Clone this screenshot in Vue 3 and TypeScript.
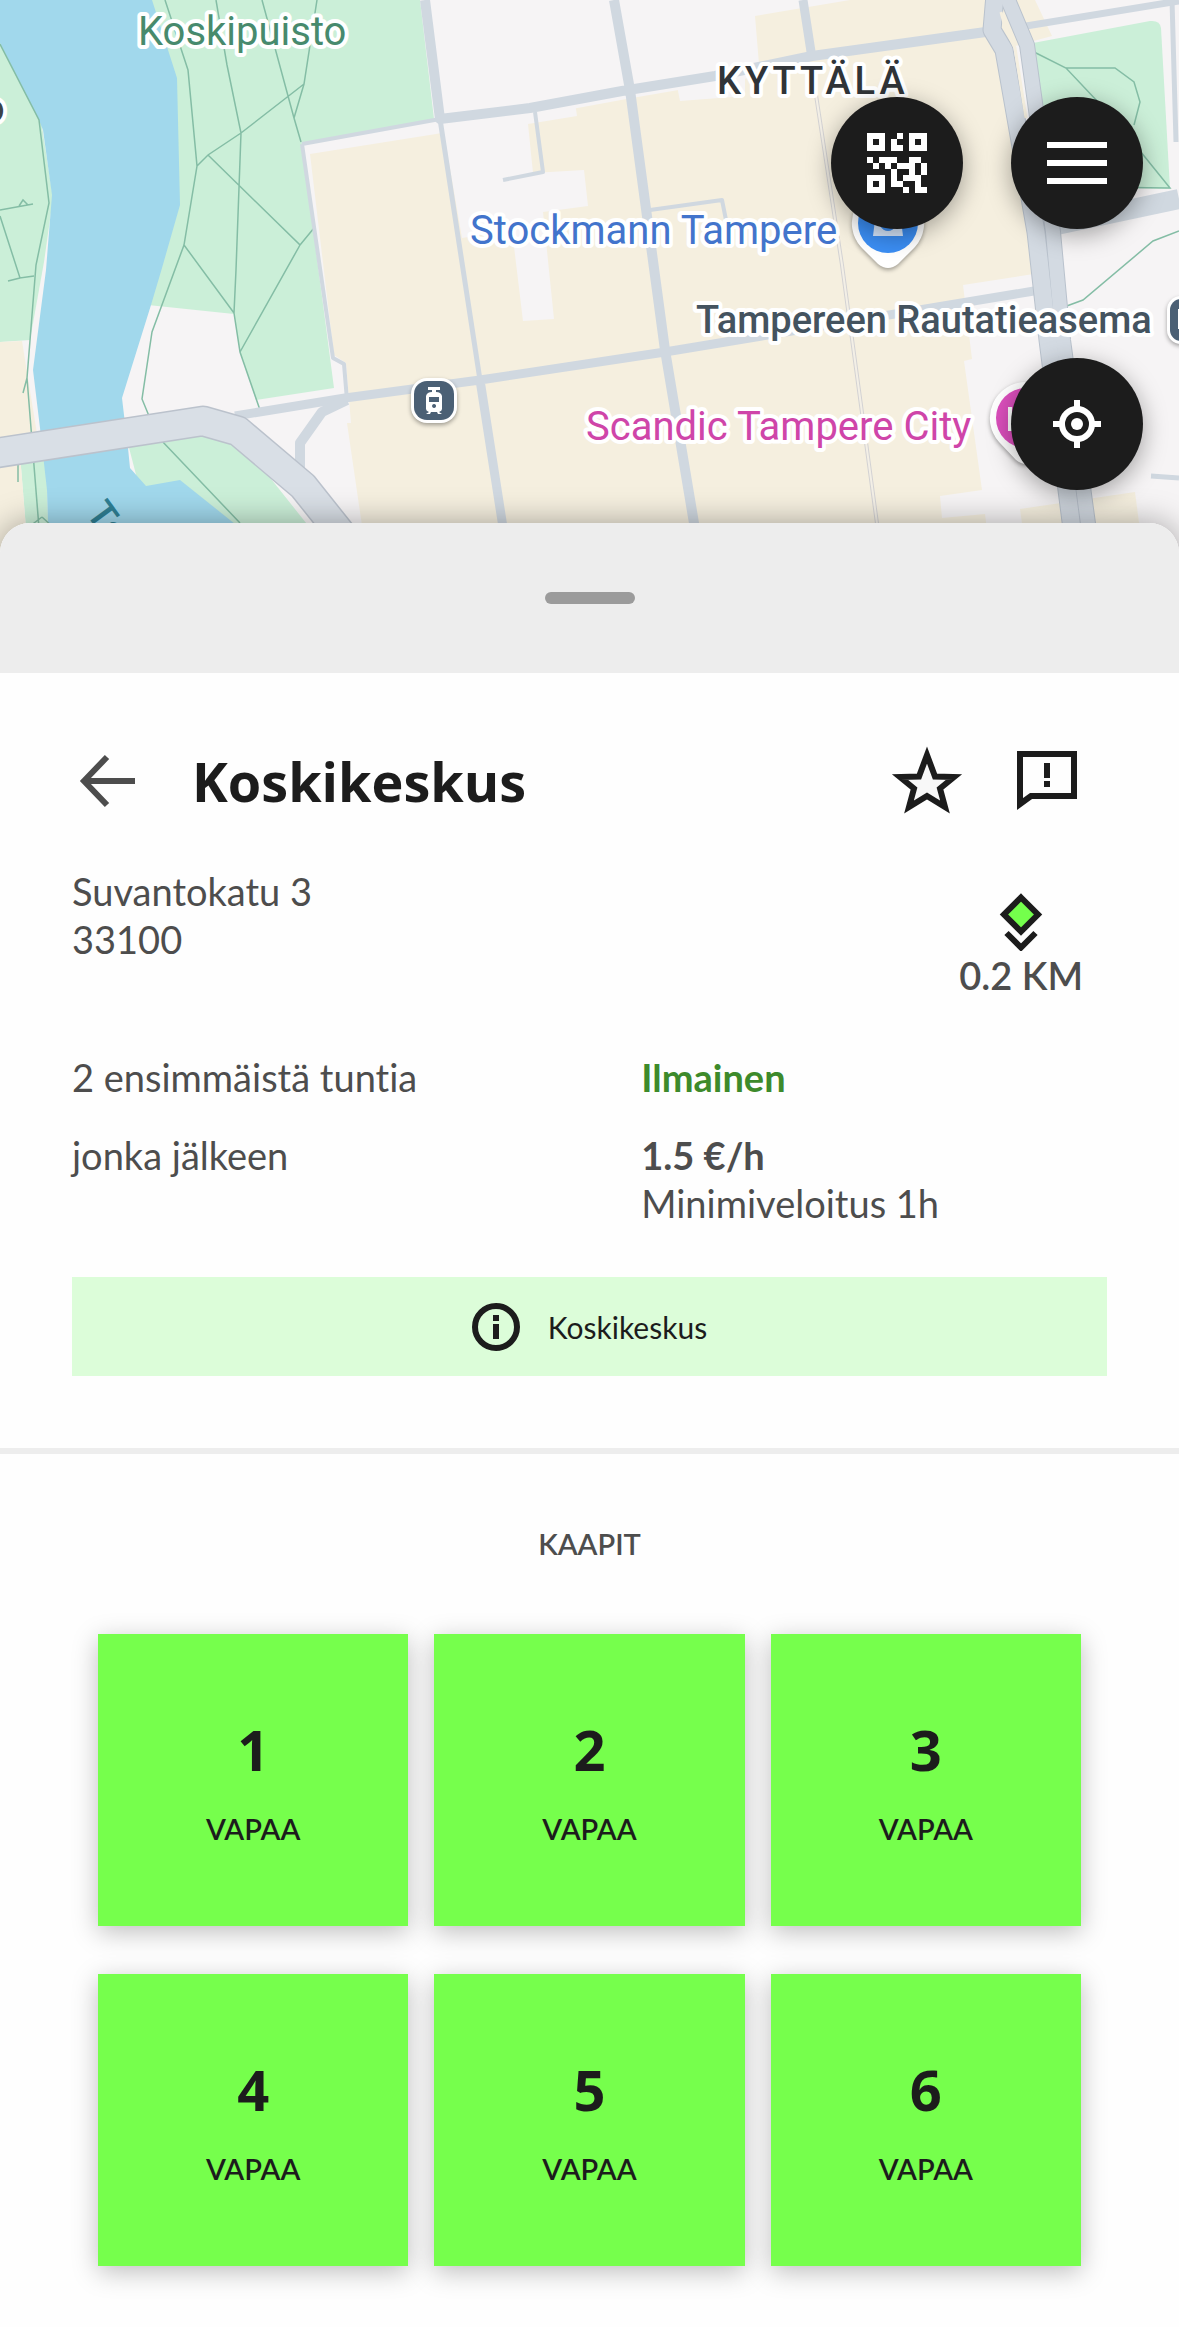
<script setup lang="ts">
interface Locker {
  id: number
  status: string
}

const lockers: Locker[] = [1, 2, 3, 4, 5, 6].map((id) => ({ id, status: 'VAPAA' }))

const qrRows: string[] = [
  '1110010111',
  '1010100101',
  '1110110111',
  '0000000000',
  '1011100110',
  '0101011101',
  '0000100101',
  '1110101110',
  '1010110010',
  '1110001011',
]
const qrPath: string = qrRows
  .map((row, y) => [...row].map((c, x) => (c === '1' ? `M${x} ${y}h1v1h-1z` : '')).join(''))
  .join('')
</script>

<template>
  <main class="page">
    <section class="map" aria-label="Kartta">
      <svg class="map-canvas" viewBox="0 0 1179 553" preserveAspectRatio="xMidYMin slice">
        <rect width="1179" height="553" fill="#f6f4f5" />
        <g fill="#cbefd8">
          <path d="M0 40L41 120 53 198 44 262 30 340 0 342z" />
          <path d="M148 0H420L434 119 302 144 334 388 256 400 240 352 234 314 148 305 150 200z" />
          <path d="M20 455L46 450 49 553H28z" />
          <path d="M127 440L200 430 240 440 330 553H240L180 490H140z" />
          <path d="M1033 43L1150 21Q1160 20 1161 28L1170 189 1050 186z" />
        </g>
        <g fill="#f5efdf">
          <path d="M0 342L22 341 38 440 0 450z" />
          <path d="M0 455H20L28 553H0z" />
          <path d="M310 154L436 134 632 98 760 76 755 16 850 0H1035L1052 36 1000 50 1040 273 963 285 972 359 964 361 982 490 940 496 942 518 985 514 990 553H366L347 423 351 423 346 363 334 355z" />
          <path d="M1020 509L1135 492 1143 553H1026z" />
        </g>
        <g fill="#f6f4f5">
          <path d="M442 122L575 102 577 116 528 124 533 173 584 170 588 206 543 212 554 319 523 321 512 230 462 238z" />
          <path d="M677 86L745 76V96L680 101z" />
        </g>
        <path fill="#a1d8ec" d="M0 0H152L177 78 180 205 162 268 151 305 122 398 124 415 128 448 130 468 146 486 180 480 245 532V553H49L47 490 40 428 33 370 46 270 52 195 43 130 39 120 0 43z" />

        <g fill="none" stroke="#84bda5" stroke-width="1.5">
          <path d="M0 44L39 120 49 203 36 265 27 378 41 553M27 378L23 393M0 210L33 204M19 206l4-6 5 5M0 216L20 278 34 276M8 281L20 278M18 462V482M42 517L30 526M42 517L54 528" />
          <path d="M165 0L188 70 197 166 184 245 152 332 142 399 149 416M216 0L227 65 241 133 236 270 234 313 240 352 260 410M262 0L294 118 301 142M317 0L304 84 294 118M304 84L241 133 208 155 197 166M208 155L300 245 240 352M300 245L314 228M184 245L234 313M161 440L240 523" />
          <path d="M1034 52L1066 68 1115 120 1170 188 1085 187M1066 68H1115L1134 82 1140 102 1134 125M1179 231L1153 241 1083 300 1064 307" />
        </g>

        <g fill="none" stroke="#d0d8e0" stroke-linejoin="round">
          <path stroke-width="4" d="M302 144L440 119M302 144L333 358 344 364 347 400M535 112L543 172 503 180M650 210L722 200 727 225" />
          <path stroke-width="5" d="M440 119L480 380M1172 0L1176 142M1151 476L1179 478" />
          <path stroke-width="9" d="M803 0L812 58M480 380L507 553M235 416L345 398 480 380 665 352 1040 290" />
          <path stroke-width="10" d="M425 0L440 119 530 108 622 91 715 76 812 56 1000 30M614 0L630 90 665 350 699 553" />
          <path stroke-width="7" d="M1020 27L1179 1" />
          <path stroke-width="10" d="M347 400L322 412 300 443V475" />
          <path stroke-width="20" d="M1052 226L1179 199" />
        </g>
        <g fill="none" stroke="#d3d2d3">
          <path stroke-width="4" d="M816 95L842 265 881 553" />
          <path stroke="#f3efe6" stroke-width="2" d="M816 95L842 265 881 553" />
        </g>
        <g fill="none" stroke-linejoin="round">
          <path stroke="#b9c2cd" stroke-width="19" d="M995-5L992 30 1004 50 1036 232 1048 340 1075 553" />
          <path stroke="#b9c2cd" stroke-width="16" d="M1006-5L1027 45 1053 232 1063 340 1092 553" />
          <path stroke="#d3dae2" stroke-width="17" d="M995-5L992 30 1004 50 1036 232 1048 340 1075 553" />
          <path stroke="#d3dae2" stroke-width="14" d="M1006-5L1027 45 1053 232 1063 340 1092 553" />
          <path stroke="#f5efdf" stroke-width="3" d="M1008 33L1015 48 1026 118M1001 12L1004 23" />
          <path stroke="#bbc2cc" stroke-width="31" d="M-10 454L203 421 238 431 303 486 350 545" />
          <path stroke="#d9dfe6" stroke-width="28" d="M-10 454L203 421 238 431 303 486 350 545" />
        </g>

        <g class="marker">
          <path fill="#fff" d="M888 187a36 36 0 0 1 27 60L898 264Q888 272 878 264L861 247A36 36 0 0 1 888 187z" />
          <circle cx="888" cy="223" r="30" fill="#3b8ef4" />
          <path fill="#d8e8fd" d="M875 220H901L903 236H873z" />
          <path fill="none" stroke="#3b8ef4" stroke-width="4" d="M881 224Q888 234 895 224" />
        </g>
        <g class="marker">
          <path fill="#fff" d="M1026 382a36 36 0 0 1 27 60L1036 460Q1026 468 1016 460L999 442A36 36 0 0 1 1026 382z" />
          <circle cx="1026" cy="418" r="30" fill="#dc4fbd" />
          <path fill="#fff" d="M1008 407h4v24h-4z" />
        </g>
        <g class="marker">
          <rect x="1167" y="296" width="50" height="48" rx="14" fill="#fff" />
          <rect x="1170" y="299" width="44" height="42" rx="11" fill="#4b6075" />
          <path fill="#fff" d="M1178 309h6v20h-6z" />
        </g>
        <g class="marker">
          <rect x="411" y="378" width="46" height="45" rx="16" fill="#fff" />
          <rect x="414" y="381" width="40" height="39" rx="13" fill="#4b6075" />
          <path fill="#fff" fill-rule="evenodd" d="M428 387H440V390H436V392Q441 392 442 396V409Q442 411 439 412L442 414H438L437 412H431L430 414H426L429 412Q426 411 426 409V396Q427 392 432 392V390H428zM429 397V402H439V397zM434 404a2 2 0 1 0 .1 0z" />
        </g>

        <g class="labels">
          <text x="-18" y="122" fill="#3c4248">o</text>
          <text x="138" y="45" fill="#478a6d">Koskipuisto</text>
          <text x="470" y="244" fill="#4274cc">Stockmann Tampere</text>
          <text x="586" y="440" fill="#cf45a9">Scandic Tampere City</text>
          <text x="696" y="333" class="station">Tampereen Rautatieasema</text>
          <text x="717" y="94" class="district">KYTTÄLÄ</text>
          <text class="river" transform="translate(85 513) rotate(54)">Ta</text>
        </g>
      </svg>

      <div class="map-top">
        <button class="fab" type="button" aria-label="Skannaa QR-koodi">
          <svg width="60" height="60" viewBox="0 0 10 10" shape-rendering="crispEdges">
            <path :d="qrPath" fill="#fff" />
          </svg>
        </button>
        <button class="fab" type="button" aria-label="Valikko">
          <svg width="60" height="60" viewBox="0 0 60 60">
            <path d="M0 9h60v6H0zM0 27h60v6H0zM0 45h60v6H0z" fill="#fff" />
          </svg>
        </button>
      </div>
      <button class="fab locate" type="button" aria-label="Oma sijainti">
        <svg width="48" height="48" viewBox="0 0 48 48">
          <path d="M21 0h6v9h-6zM21 39h6v9h-6zM0 21h9v6H0zM39 21h9v6h-9z" fill="#fff" />
          <circle cx="24" cy="24" r="15" fill="none" stroke="#fff" stroke-width="6" />
          <circle cx="24" cy="24" r="6" fill="#fff" />
        </svg>
      </button>
    </section>

    <section class="sheet">
      <div class="grip"><span class="grip-bar"></span></div>

      <div class="details">
        <header class="title-row">
          <button class="icon-button" type="button" aria-label="Takaisin">
            <svg width="72" height="72" viewBox="0 0 72 72" fill="none" stroke="#4d4d4d" stroke-width="6">
              <path d="M12 36H63M35 12L12 36 35 60" />
            </svg>
          </button>
          <h1>Koskikeskus</h1>
          <button class="icon-button" type="button" aria-label="Lisää suosikiksi">
            <svg width="72" height="72" viewBox="0 0 72 72">
              <path d="M36 10L44 31.500 63 32 49 43.500 54 62 36 51 18 62 23 43.500 9 32 28 31.500z" fill="#f8f8f8" stroke="#1c1c1c" stroke-width="6" />
            </svg>
          </button>
          <button class="icon-button" type="button" aria-label="Anna palautetta">
            <svg width="72" height="72" viewBox="0 0 72 72">
              <path d="M9 9H63V51H20L9 59z" fill="none" stroke="#1c1c1c" stroke-width="6" />
              <path d="M33 18h6v15h-6zM33 36h6v6h-6z" fill="#1c1c1c" />
            </svg>
          </button>
        </header>

        <div class="place-row">
          <address>Suvantokatu 3<br />33100</address>
          <div class="distance">
            <svg width="44" height="58" viewBox="0 0 44 58">
              <path d="M22 4.500L39 21.500 22 38.500 5 21.500z" fill="#74ff4c" stroke="#1c1c1c" stroke-width="6" />
              <path d="M7.500 40L22 54.500 36.500 40" fill="none" stroke="#1c1c1c" stroke-width="6" />
            </svg>
            <span>0.2 KM</span>
          </div>
        </div>

        <dl class="pricing">
          <div class="price">
            <dt>2 ensimmäistä tuntia</dt>
            <dd><strong class="free">Ilmainen</strong></dd>
          </div>
          <div class="price">
            <dt>jonka jälkeen</dt>
            <dd><strong>1.5 €/h</strong><br />Minimiveloitus 1h</dd>
          </div>
        </dl>

        <div class="notice">
          <svg width="48" height="48" viewBox="0 0 48 48">
            <circle cx="24" cy="24" r="21" fill="none" stroke="#1c1c1c" stroke-width="6" />
            <path d="M21 12h6v6h-6zM21 21h6v15h-6z" fill="#1c1c1c" />
          </svg>
          <span>Koskikeskus</span>
        </div>
      </div>

      <div class="lockers">
        <h2>KAAPIT</h2>
        <div class="locker-grid">
          <button v-for="locker in lockers" :key="locker.id" class="locker" type="button">
            <span class="number">{{ locker.id }}</span>
            <span class="status">{{ locker.status }}</span>
          </button>
        </div>
      </div>
    </section>
  </main>
</template>

<style>
body {
  margin: 0;
  background: #fefefe;
}
</style>

<style scoped>
.page {
  font-family: Lato, "Open Sans", sans-serif;
  font-size: 38px;
  font-variant-ligatures: none;
  line-height: 48px;
  color: #4d4d4d;
}

button {
  padding: 0;
  border: 0;
  font: inherit;
  color: inherit;
  cursor: pointer;
}

svg {
  display: block;
}

.map {
  position: relative;
  height: 553px;
  overflow: hidden;
}

.map-canvas {
  width: 100%;
  height: 100%;
}

.marker {
  filter: drop-shadow(0 2px 2px rgba(0, 0, 0, 0.35));
}

.labels {
  font-family: Roboto, sans-serif;
  font-size: 40px;
  stroke: #fff;
  stroke-width: 8px;
  stroke-linejoin: round;
  paint-order: stroke;
}

.labels .station {
  font-size: 38px;
  font-weight: 500;
  fill: #44535f;
}

.labels .district {
  font-size: 38px;
  font-weight: 500;
  letter-spacing: 4px;
  fill: #303438;
}

.labels .river {
  font-size: 38px;
  font-weight: 500;
  fill: #2f7f93;
  stroke: none;
}

.map-top {
  position: absolute;
  top: 97px;
  right: 36px;
  display: flex;
  gap: 48px;
}

.fab {
  display: flex;
  align-items: center;
  justify-content: center;
  width: 132px;
  height: 132px;
  border-radius: 50%;
  background: #1c1c1c;
  box-shadow: 0 6px 24px rgba(0, 0, 0, 0.35);
}

.locate {
  position: absolute;
  top: 358px;
  right: 36px;
}

.sheet {
  position: relative;
  margin-top: -30px;
  border-radius: 30px 30px 0 0;
  background: #fefefe;
  box-shadow: 0 0 32px rgba(0, 0, 0, 0.35);
}

.grip {
  display: flex;
  align-items: center;
  justify-content: center;
  height: 150px;
  border-radius: 30px 30px 0 0;
  background: #ededed;
}

.grip-bar {
  width: 90px;
  height: 12px;
  border-radius: 6px;
  background: #9b9b9b;
}

.details {
  padding: 72px;
  border-bottom: 6px solid #ededed;
}

.title-row {
  display: flex;
  align-items: center;
  gap: 48px;
  padding-right: 24px;
}

.icon-button {
  width: 72px;
  height: 72px;
  background: none;
}

h1 {
  flex: 1;
  margin: 0;
  font-family: "Open Sans", sans-serif;
  font-size: 54px;
  line-height: 72px;
  font-weight: 700;
  color: #1c1c1c;
}

.place-row {
  display: flex;
  justify-content: space-between;
  align-items: flex-start;
  margin-top: 50px;
  padding-right: 24px;
}

address {
  font-style: normal;
}

.distance {
  display: flex;
  flex-direction: column;
  align-items: center;
  padding-top: 26px;
  font-weight: 600;
}

.pricing {
  display: flex;
  flex-direction: column;
  gap: 30px;
  margin: 54px 0 50px;
}

.price {
  display: flex;
}

dt {
  width: 55%;
}

dd {
  margin: 0;
}

strong {
  font-weight: 700;
}

.free {
  color: #3d8a2b;
}

.notice {
  display: flex;
  align-items: center;
  justify-content: center;
  gap: 28px;
  height: 99px;
  background: #dcfdd9;
  font-size: 30px;
  color: #1c1c1c;
}

.lockers {
  padding: 72px 98px 60px;
}

h2 {
  margin: 0 0 72px;
  font-size: 29px;
  line-height: 36px;
  font-weight: 600;
  text-align: center;
}

.locker-grid {
  display: grid;
  grid-template-columns: repeat(3, 1fr);
  gap: 48px 26px;
}

.locker {
  display: flex;
  flex-direction: column;
  align-items: center;
  justify-content: center;
  gap: 26px;
  min-height: 292px;
  background: #76ff4c;
  color: #1c1c1c;
  box-shadow: 0 6px 24px rgba(0, 0, 0, 0.25);
}

.number {
  font-family: "Open Sans", sans-serif;
  font-size: 56px;
  line-height: 72px;
  font-weight: 700;
}

.status {
  font-size: 29px;
  line-height: 36px;
  font-weight: 600;
}
</style>
